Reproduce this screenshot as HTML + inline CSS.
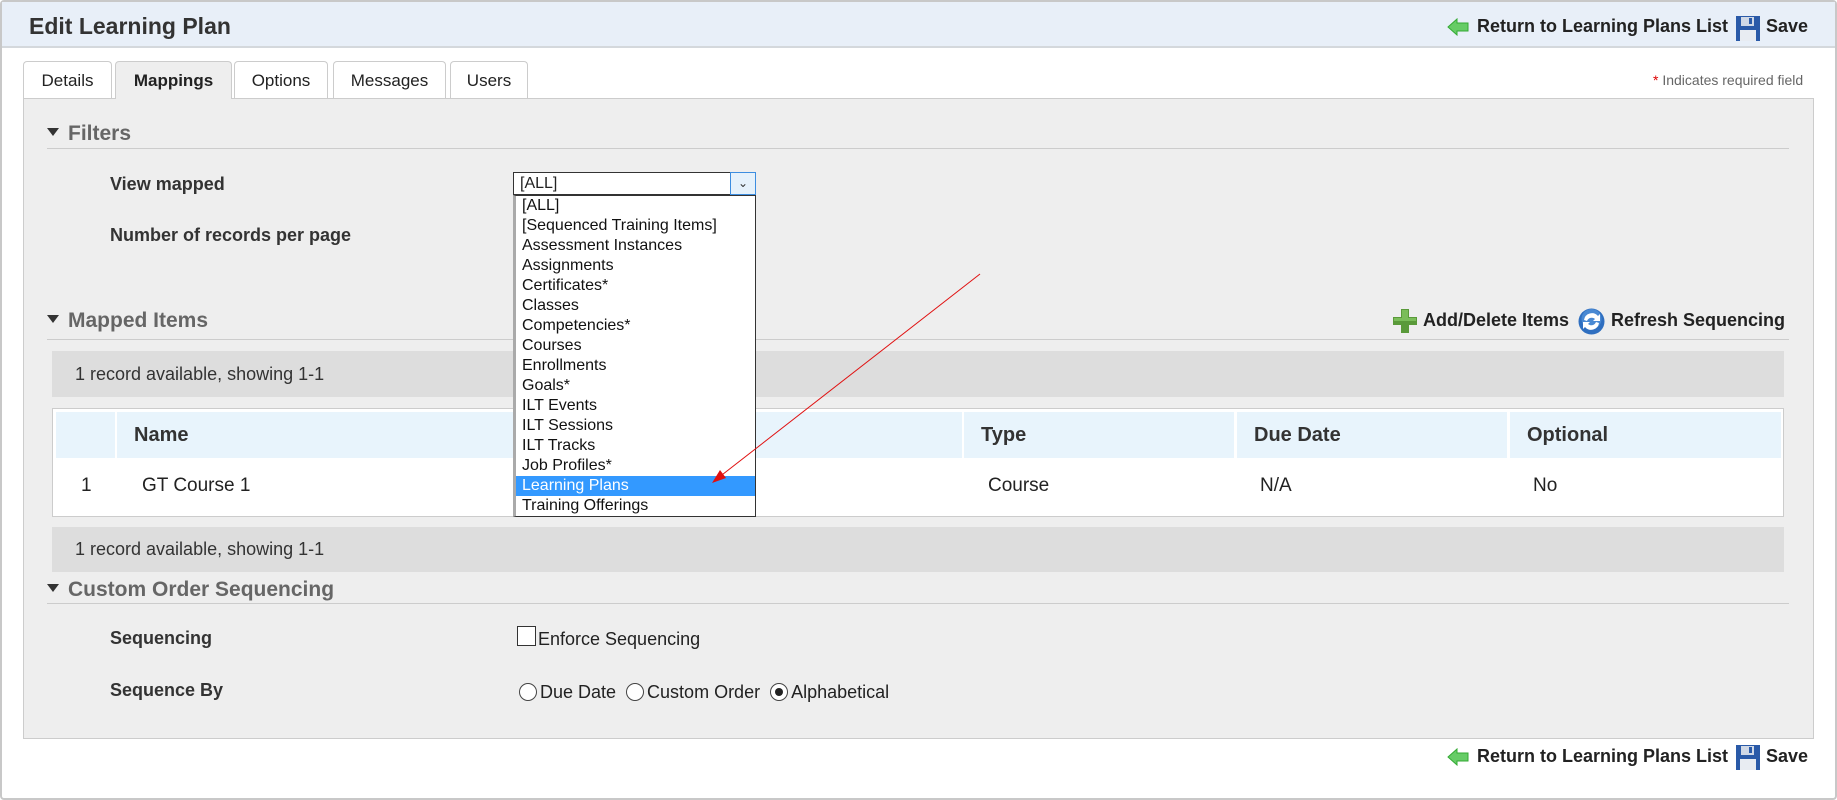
<!DOCTYPE html>
<html><head><meta charset="utf-8"><style>
*{box-sizing:border-box}
body{margin:0;width:1837px;height:800px;background:#fff;font-family:"Liberation Sans",Arial,sans-serif;color:#222;position:relative;overflow:hidden}
.abs{position:absolute}
.frame{position:absolute;left:0;top:0;width:1837px;height:800px;border:2px solid #c8c8c8;border-radius:4px}
.hdr{position:absolute;left:2px;top:2px;width:1833px;height:46px;background:#e8eff8;border-bottom:2px solid #d4d8dc}
.title{left:29px;top:13px;font-size:23px;font-weight:bold;color:#333}
.lnk{font-size:17.5px;font-weight:bold;color:#222;white-space:nowrap}
.tab{position:absolute;top:61px;height:38px;border:1px solid #ccc;border-bottom:none;border-radius:4px 4px 0 0;background:#fff;font-size:17px;text-align:center;line-height:37px;color:#222}
.tab.act{background:#eee;font-weight:bold;height:38px}
.panel{position:absolute;left:23px;top:98px;width:1791px;height:641px;background:#eee;border:1px solid #ccc}
.sec{font-size:21px;font-weight:bold;color:#666}
.tri{display:inline-block;width:0;height:0;border-left:6px solid transparent;border-right:6px solid transparent;border-top:8px solid #333;margin-right:9px;vertical-align:4px}
.line{position:absolute;height:1px;background:#ccc;left:47px;width:1742px}
.lbl{font-size:18px;font-weight:bold;color:#333}
.bar{position:absolute;left:52px;width:1732px;background:#ddd;font-size:18px;color:#333;padding-left:23px}
.item{height:20px;line-height:20px;font-size:16px;padding-left:6px;color:#111;white-space:nowrap}
.th{position:absolute;top:3px;height:46px;background:#e8f4fc;font-size:20px;font-weight:bold;line-height:46px;padding-left:17px;color:#333}
.td{position:absolute;top:66px;font-size:19px;color:#222}
.radio{display:inline-block;width:18px;height:18px;border:1px solid #444;border-radius:50%;background:#fff;vertical-align:-3px;position:relative;margin-right:3px}
</style></head><body>
<div class="frame"></div>
<div class="hdr"></div>
<div class="abs title">Edit Learning Plan</div>

<svg class="abs" style="left:1447px;top:18px" width="22" height="18" viewBox="0 0 22 18"><path d="M1 9 L10 1 L10 5 L21 5 L21 13 L10 13 L10 17 Z" fill="#6c6" stroke="#3a3" stroke-width="1"/></svg>
<div class="abs lnk" style="left:1477px;top:16px;font-size:18px">Return to Learning Plans List</div>
<svg class="abs" style="left:1736px;top:16px" width="24" height="25" viewBox="0 0 24 25"><rect x="0" y="0" width="24" height="25" fill="#2a5aa8"/><rect x="5" y="1" width="13" height="9" fill="#cfd8e6"/><rect x="13" y="2" width="3" height="6" fill="#2a5aa8"/><rect x="4" y="14" width="16" height="11" fill="#e8ecf2"/></svg>
<div class="abs lnk" style="left:1766px;top:16px;font-size:18px">Save</div>

<div class="tab" style="left:23px;width:89px">Details</div>
<div class="tab act" style="left:115px;width:117px;z-index:2">Mappings</div>
<div class="tab" style="left:234px;width:94px">Options</div>
<div class="tab" style="left:333px;width:113px">Messages</div>
<div class="tab" style="left:450px;width:78px">Users</div>
<div class="abs" style="left:1653px;top:72px;font-size:14px;color:#666"><span style="color:#d00">*</span> Indicates required field</div>

<div class="panel"></div>
<div class="abs sec" style="left:47px;top:122px"><span class="tri"></span>Filters</div>
<div class="line" style="top:148px"></div>
<div class="abs lbl" style="left:110px;top:174px">View mapped</div>
<div class="abs lbl" style="left:110px;top:225px">Number of records per page</div>

<div class="abs sec" style="left:47px;top:309px"><span class="tri"></span>Mapped Items</div>
<div class="line" style="top:339px"></div>
<svg class="abs" style="left:1393px;top:309px" width="24" height="24" viewBox="0 0 24 24"><path d="M8 0h8v8h8v8h-8v8H8v-8H0V8h8z" fill="#5a9a3a"/><path d="M9 1h6v8h8v3H1V9h8z" fill="#8c6" opacity=".7"/></svg>
<div class="abs lnk" style="left:1423px;top:310px;font-size:18px">Add/Delete Items</div>
<svg class="abs" style="left:1578px;top:308px" width="27" height="27" viewBox="0 0 27 27"><circle cx="13.5" cy="13.5" r="13" fill="#2f6fc0"/><circle cx="13.5" cy="11" r="10" fill="#5b9be0" opacity=".6"/><path d="M6 12a8 8 0 0 1 14-4l2-2v7h-7l2-2a5 5 0 0 0-8 2z M21 15a8 8 0 0 1-14 4l-2 2v-7h7l-2 2a5 5 0 0 0 8-2z" fill="#fff"/></svg>
<div class="abs lnk" style="left:1611px;top:310px;font-size:18px">Refresh Sequencing</div>

<div class="bar" style="top:351px;height:46px;line-height:46px">1 record available, showing 1-1</div>
<div class="abs" style="left:52px;top:408px;width:1732px;height:109px;background:#fff;border:1px solid #ccc">
  <div class="th" style="left:3px;width:59px"></div>
  <div class="th" style="left:64px;width:845px">Name</div>
  <div class="th" style="left:911px;width:270px">Type</div>
  <div class="th" style="left:1184px;width:270px">Due Date</div>
  <div class="th" style="left:1457px;width:271px">Optional</div>
  <div class="td" style="left:28px">1</div>
  <div class="td" style="left:89px">GT Course 1</div>
  <div class="td" style="left:935px">Course</div>
  <div class="td" style="left:1207px">N/A</div>
  <div class="td" style="left:1480px">No</div>
</div>
<div class="bar" style="top:527px;height:45px;line-height:45px">1 record available, showing 1-1</div>

<div class="abs sec" style="left:47px;top:578px"><span class="tri"></span>Custom Order Sequencing</div>
<div class="line" style="top:603px"></div>
<div class="abs lbl" style="left:110px;top:628px">Sequencing</div>
<div class="abs lbl" style="left:110px;top:680px">Sequence By</div>
<div class="abs" style="left:517px;top:626px;width:19px;height:20px;border:1px solid #333;background:#fff"></div>
<div class="abs" style="left:538px;top:629px;font-size:18px">Enforce Sequencing</div>
<div class="abs" style="left:519px;top:682px;font-size:18px;white-space:nowrap"><span class="radio"></span>Due Date&nbsp; <span class="radio"></span>Custom Order&nbsp; <span class="radio"><span style="position:absolute;left:4px;top:4px;width:8px;height:8px;border-radius:50%;background:#222"></span></span>Alphabetical</div>

<svg class="abs" style="left:1447px;top:748px" width="22" height="18" viewBox="0 0 22 18"><path d="M1 9 L10 1 L10 5 L21 5 L21 13 L10 13 L10 17 Z" fill="#6c6" stroke="#3a3" stroke-width="1"/></svg>
<div class="abs lnk" style="left:1477px;top:746px;font-size:18px">Return to Learning Plans List</div>
<svg class="abs" style="left:1736px;top:745px" width="24" height="25" viewBox="0 0 24 25"><rect x="0" y="0" width="24" height="25" fill="#2a5aa8"/><rect x="5" y="1" width="13" height="9" fill="#cfd8e6"/><rect x="13" y="2" width="3" height="6" fill="#2a5aa8"/><rect x="4" y="14" width="16" height="11" fill="#e8ecf2"/></svg>
<div class="abs lnk" style="left:1766px;top:746px;font-size:18px">Save</div>

<div class="abs" style="left:513px;top:172px;width:243px;height:23px;background:#fff;border:1px solid #333">
  <div style="font-size:16px;padding-left:6px;line-height:21px">[ALL]</div>
  <div style="position:absolute;right:-1px;top:-1px;width:26px;height:23px;border:1px solid #3c8de0;background:#e5f1fb;text-align:center;font-size:12px;line-height:21px;color:#333">&#8964;</div>
</div>
<div class="abs" style="left:513px;top:195px;width:243px;height:322px;background:#fff;border:1px solid #333;border-left:3px solid #aaa">
  <div class="item">[ALL]</div>
  <div class="item">[Sequenced Training Items]</div>
  <div class="item">Assessment Instances</div>
  <div class="item">Assignments</div>
  <div class="item">Certificates*</div>
  <div class="item">Classes</div>
  <div class="item">Competencies*</div>
  <div class="item">Courses</div>
  <div class="item">Enrollments</div>
  <div class="item">Goals*</div>
  <div class="item">ILT Events</div>
  <div class="item">ILT Sessions</div>
  <div class="item">ILT Tracks</div>
  <div class="item">Job Profiles*</div>
  <div class="item" style="background:#3399ff;color:#fff">Learning Plans</div>
  <div class="item">Training Offerings</div>
</div>
<svg class="abs" style="left:0;top:0" width="1837" height="800"><line x1="980" y1="274" x2="718" y2="478" stroke="#e01010" stroke-width="1"/><path d="M712 483 L720 470 L726 478 Z" fill="#e01010"/></svg>
</body></html>
